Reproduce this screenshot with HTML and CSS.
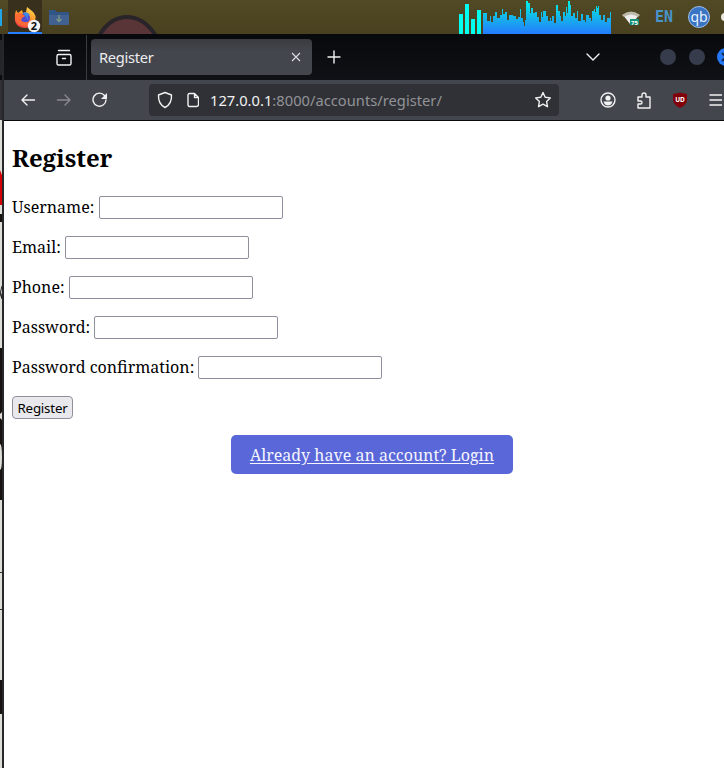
FILE: index.html
```html
<!DOCTYPE html>
<html lang="en">
<head>
<meta charset="utf-8">
<title>Register</title>
<link rel="stylesheet" href="styles.css">
</head>
<body>
<header class="panel">
  <i class="task-edge"></i>
  <div class="task active">
    <svg width="34" height="34" viewBox="0 0 34 34">
      <defs><linearGradient id="fox" x1=".8" y1="0" x2=".3" y2="1"><stop stop-color="#ffe14b"/><stop offset=".45" stop-color="#ff9830"/><stop offset="1" stop-color="#f13b45"/></linearGradient></defs>
      <path d="M8 10l2 3 4-3 1 3 3-1 1-5 5 4q5 4 3 10-3 7-10 7-8 0-10-7-1-6 1-11z" fill="url(#fox)"/>
      <circle cx="17" cy="18" r="5" fill="#514bd1"/>
      <path d="M7 15q5-4 10 1l-3 2q-2 3 2 4 5 1 7-3-1 7-7 7-8-1-9-11z" fill="#ff6934"/>
      <path d="M15 13q4-2 7 2l-3 1q2 2 1 4-3-4-5-7z" fill="#3889e9"/>
      <circle cx="26" cy="26" r="6.2" fill="#f4f4f4"/>
      <text x="26" y="30" text-anchor="middle" class="count">2</text>
    </svg>
  </div>
  <svg class="folder" width="22" height="18" viewBox="0 0 22 18"><path d="M1 2q0-1 1-1h5l2 2h11q1 0 1 1v11q0 1-1 1H2q-1 0-1-1z" fill="#305688"/><path d="M1 6h20v9q0 1-1 1H2q-1 0-1-1z" fill="#416291"/><path d="M11 6v6M8.500 10l2.500 2.500 2.500-2.500" stroke="#819985" stroke-width="1.300" fill="none"/></svg>
  <svg class="wallpaper" width="64" height="34" viewBox="0 0 64 34"><path d="M3 36Q14 17 31 17T60 36" fill="#593538" stroke="#29242a" stroke-width="4"/></svg>
  <svg class="graph" width="153" height="34" viewBox="0 0 153 34">
    <defs><linearGradient id="wave" gradientUnits="userSpaceOnUse" x1="0" y1="0" x2="0" y2="34"><stop stop-color="#00f6ec"/><stop offset=".45" stop-color="#13bce8"/><stop offset="1" stop-color="#247cff"/></linearGradient></defs>
    <path d="M0 14h4v20H0zM6 4h4v30H6zM12 19h4v15h-4zM18 10h4v24h-4z" fill="#0fe"/>
    <path d="M24 34V13H28V21H31V16H32V22H34V16H36V12H38V18H41V15H43V9H44V14H46V12H48V20H50V15H54V16H57V19H59V17H61V9H62V18H64V22H65V26H66V20H67V1H69V3H71V13H72V8H74V13H76V12H78V17H80V22H82V12H83V17H84V11H87V16H89V21H91V18H92V21H93V16H95V23H97V5H99V11H101V16H102V21H104V12H106V16H107V7H108V13H109V1H111V5H112V16H114V13H116V18H118V11H119V21H122V14H124V20H126V22H127V15H130V18H132V21H133V11H135V9H136V12H137V6H138V8H139V6H140V15H142V20H144V15H146V22H148V18H151V12H152V34z" fill="url(#wave)"/>
  </svg>
  <svg class="wifi" width="18" height="17" viewBox="0 0 18 17"><path d="M1 5Q9-1 17 5L10 14q-1 1-2 0z" fill="#ededed"/><path d="M0 5Q9-2 18 5l-2 2Q9 2 2 7z" fill="#bdbaac"/><path d="M8 9h9v6H8z" fill="#168f77"/><text x="9" y="14.500" class="signal">75</text></svg>
  <span class="language">EN</span>
  <svg class="qb" width="22" height="22" viewBox="0 0 22 22"><circle cx="11" cy="11" r="10.500" fill="#3974c5" stroke="#9fbee6"/><text x="11" y="15.500" text-anchor="middle" class="qb-text">qb</text></svg>
  <i class="tray-edge"></i>
</header>
<div class="window">
  <aside class="behind">
    <svg width="4" height="734" viewBox="0 34 4 734">
      <path d="M0 34h4v6H0z" fill="#0b0c10"/><path d="M0 40h3v35H0z" fill="#24252a"/><path d="M0 75h3v5H0z" fill="#0b0c10"/><path d="M0 80h3v40H0z" fill="#303137"/>
      <path d="M0 120h2v648H0z" fill="#deded8"/><path d="M0 170l2 5v30H0z" fill="#d50005"/><path d="M0 214h2v8H0zM0 348h2v152H0zM0 680h2v34H0z" fill="#171210"/>
      <path d="M2 286q-3 6 0 12M0 293l2 6" stroke="#222" fill="none"/><path d="M0 414l2-2v8l-2-2zM0 444q2 0 2 13t-2 13z" fill="#deded8"/><path d="M0 572h2v1H0zM0 609h2v1H0z" fill="#343434"/><path d="M2 34h2v734H2z" fill="#25272b"/>
    </svg>
  </aside>
  <section class="browser">
    <div class="tabs">
      <div class="archive"><svg width="18" height="18" viewBox="0 0 18 18"><path d="M3.500 1.500h11M3.500 5.500h11q1.500 0 1.500 1.500v7.500q0 1.500-1.500 1.500h-11Q2 16 2 14.500V7q0-1.500 1.500-1.500zM7.500 9.500h3" class="line"/></svg></div>
      <div class="tab"><span>Register</span><svg width="10" height="10" viewBox="0 0 10 10"><path d="M1 1l8 8M9 1L1 9" class="thin"/></svg></div>
      <svg class="plus" width="14" height="14" viewBox="0 0 14 14"><path d="M7 1v12M1 7h12" class="line"/></svg>
      <svg class="chevron" width="14" height="8" viewBox="0 0 14 8"><path d="M1 1l6 6 6-6" class="line"/></svg>
      <i class="dot first"></i><i class="dot"></i>
      <svg class="close" width="7" height="18" viewBox="0 0 7 18"><circle cx="9" cy="9" r="9" fill="#2477f5"/><path d="M5 5l8 8M5 13l8-8" stroke="#142849" stroke-width="2"/></svg>
    </div>
    <nav class="toolbar">
      <svg class="back" width="16" height="16" viewBox="0 0 16 16"><path d="M14.500 8H2m5-5L2 8l5 5" class="line"/></svg>
      <svg class="forward" width="16" height="16" viewBox="0 0 16 16"><path d="M1.500 8H14M9 3l5 5-5 5" class="line"/></svg>
      <svg class="reload" width="16" height="16" viewBox="0 0 16 16"><path d="M14 8A6.500 6.500 0 1 1 12.500 3.500L14 5" class="line"/><path d="M15 1v6H9z" fill="#f2f2f2"/></svg>
      <div class="address">
        <svg class="shield" width="16" height="18" viewBox="0 0 16 18"><path d="M8 1.500L14.500 4q.5 9-6.500 12.500Q1 13 1.500 4z" class="line"/></svg>
        <svg class="page-icon" width="12" height="16" viewBox="0 0 12 16"><path d="M2.500 1.500h5l4 4v7q0 2-2 2h-7q-1.500 0-1.500-2V3q0-1.500 1.500-1.500zM7.500 1.500v4h4" class="line"/></svg>
        <span class="url"><b>127.0.0.1</b>:8000/accounts/register/</span>
        <svg class="star" width="18" height="18" viewBox="0 0 18 18"><path d="M9 1.500l2.200 4.700 5.100.7-3.700 3.600.9 5.200L9 13.200l-4.500 2.500.9-5.200-3.700-3.600 5.100-.7z" class="line"/></svg>
      </div>
      <svg class="account" width="16" height="16" viewBox="0 0 16 16"><circle cx="8" cy="8" r="7" class="line"/><circle cx="8" cy="6" r="2.600" fill="#f2f2f2"/><path d="M3.500 9.500h9q-1 4-4.500 4t-4.500-4z" fill="#f2f2f2"/></svg>
      <svg class="puzzle" width="16" height="17" viewBox="0 0 16 17"><path d="M2 5h4V3q0-2 2-2t2 2v2h4v11H2v-4h2.500q1.500 0 1.500-1.500T4.500 9H2z" class="line"/></svg>
      <svg class="ublock" width="14" height="16" viewBox="0 0 14 16"><path d="M7 .500q3 1 7 1.500v5q0 6-7 9-7-3-7-9V2q4-.5 7-1.500z" fill="#820009"/><text x="7" y="9.500" text-anchor="middle" class="badge-text">UD</text></svg>
      <svg class="menu" width="13" height="12" viewBox="0 0 13 12"><path d="M1 1h12M1 6h12M1 11h12" class="line"/></svg>
    </nav>
    <main>
      <h2>Register</h2>
      <form>
        <p><label class="w82" for="u">Username:</label><input id="u"></p>
        <p><label class="w48" for="e">Email:</label><input id="e"></p>
        <p><label class="w52" for="t">Phone:</label><input id="t"></p>
        <p><label class="w77" for="p">Password:</label><input id="p" type="password"></p>
        <p><label class="w181" for="c">Password confirmation:</label><input id="c" type="password"></p>
        <button type="button">Register</button>
      </form>
      <a class="login" href="#">Already have an account? Login</a>
    </main>
  </section>
</div>
</body>
</html>
```
FILE: styles.css
```css
* { box-sizing: border-box; }
body { margin: 0; width: 724px; height: 768px; overflow: hidden; background: #fff; color: #000; font: 16px "Noto Serif", "DejaVu Serif Condensed", "DejaVu Serif", serif; }
svg { display: block; flex: none; }
.panel { display: flex; height: 34px; background: linear-gradient(#514a25, #49401f); overflow: hidden; }
.panel > * { flex: none; }
.task-edge { width: 2px; height: 17px; margin: 9px 6px 0 0; background: #20a5e8; }
.task { width: 34px; height: 34px; background: #38301d; border-bottom: 2px solid #2780ff; }
.count { font: bold 11px "Noto Sans", sans-serif; fill: #111; }
.folder { margin: 9px 0 0 6px; }
.wallpaper { margin-left: 26px; }
.graph { margin-left: 299px; }
.wifi { margin: 10px 0 0 10px; }
.signal { font: bold 6px "Noto Sans", sans-serif; fill: #fff; }
.language { width: 18px; margin: 7px 0 0 15px; color: #4794cb; font: bold 15px/20px "DejaVu Sans Mono", monospace; }
.qb { margin: 6px 0 0 15px; }
.qb-text { font: 14px "Noto Sans", sans-serif; fill: #e7f2ff; }
.tray-edge { width: 4px; height: 8px; margin: 13px 0 0 11px; border-radius: 4px 0 0 4px; background: #e9e5df; }
.window { display: flex; height: 734px; }
.behind { width: 4px; }
.browser { width: 720px; }
.tabs { display: flex; align-items: center; height: 46px; background: linear-gradient(#08090c, #0f1116); }
.archive { width: 83px; height: 45px; padding: 14px 0 0 51px; border-right: 1px solid #3b3c42; }
.tab { display: flex; align-items: center; justify-content: space-between; width: 221px; height: 36px; margin-left: 4px; padding: 0 11px 0 8px; border-radius: 4px; background: linear-gradient(#3a3b40, #44464e 35%); color: #ededef; font: 14.67px "Noto Sans", sans-serif; letter-spacing: -.3px; flex: none; }
.line { fill: none; stroke: #f1f1f1; stroke-width: 1.4; stroke-linejoin: round; stroke-linecap: round; }
.thin { stroke: #dedede; stroke-width: 1.1; }
.plus { margin-left: 15px; }
.chevron { margin-left: 245px; }
.dot { width: 16px; height: 16px; margin-left: 13px; border-radius: 50%; background: #363c4b; flex: none; }
.dot.first { margin-left: 60px; }
.close { margin-left: 12px; }
.toolbar { display: flex; align-items: center; height: 41px; background: #44464e; border-bottom: 1px solid #08090b; }
.back { margin-left: 16px; }
.forward { margin-left: 20px; opacity: .4; }
.reload { margin-left: 20px; }
.address { display: flex; align-items: center; width: 410px; height: 32px; margin-left: 41px; padding-left: 8px; border-radius: 4px; background: #303136; flex: none; }
.page-icon { margin-left: 14px; }
.url { width: 234px; margin-left: 11px; color: #929398; font: 14.67px "Noto Sans", sans-serif; letter-spacing: .03px; white-space: nowrap; }
.url b { color: #f1f1f3; font-weight: 400; }
.star { margin-left: 90px; }
.account { margin-left: 41px; }
.puzzle { margin-left: 20px; }
.ublock { margin-left: 21px; }
.badge-text { font: bold 6.5px "Noto Sans", sans-serif; fill: #fff; }
.menu { margin-left: 22px; }
main { padding: 20px 8px 0; }
h2 { height: 33px; margin: 0 0 22px; font-size: 24px; line-height: 33px; }
p { display: flex; height: 23px; margin: 0 0 17px; line-height: 22px; }
label { margin-right: 5px; white-space: nowrap; }
.w82 { width: 82px; }
.w48 { width: 48px; }
.w52 { width: 52px; }
.w77 { width: 77px; }
.w181 { width: 181px; }
input { width: 184px; height: 23px; padding: 1px 2px; border: 1px solid #8f8f9d; border-radius: 2px; background: #fff; }
button { display: block; width: 61px; height: 23px; padding: 1px 0 0; border: 1px solid #8f8f9d; border-radius: 4px; background: #e9e9ed; color: #000; font: 13.333px/20px "Noto Sans", sans-serif; letter-spacing: -.2px; }
.login { display: block; width: 282px; height: 39px; margin: 16px 0 0 219px; padding-top: 1px; border-radius: 5px; background: #5967d8; color: #f5f5ff; line-height: 38px; text-align: center; white-space: nowrap; text-underline-offset: 2px; }
```
